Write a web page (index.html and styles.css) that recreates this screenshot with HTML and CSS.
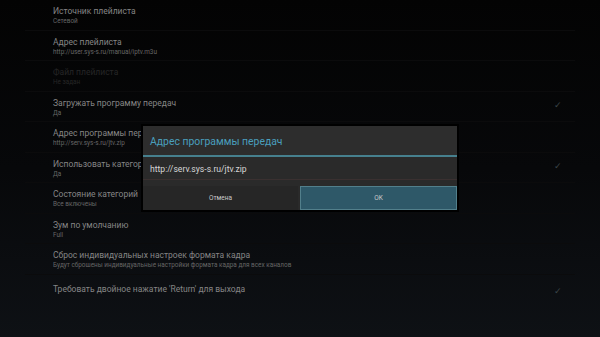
FILE: index.html
```html
<!DOCTYPE html>
<html lang="ru">
<head>
    <meta charset="UTF-8">
    <title>Настройки</title>
    <link rel="stylesheet" href="styles.css">
</head>
<body>

    <div class="screen">
        <!-- Settings list -->
        <div class="prefs">
            <div class="pref">
                <div class="pref-text">
                    <div class="pref-title">Источник плейлиста</div>
                    <div class="pref-sub">Сетевой</div>
                </div>
            </div>
            <div class="pref">
                <div class="pref-text">
                    <div class="pref-title">Адрес плейлиста</div>
                    <div class="pref-sub">http://user.sys-s.ru/manual/iptv.m3u</div>
                </div>
            </div>
            <div class="pref disabled">
                <div class="pref-text">
                    <div class="pref-title">Файл плейлиста</div>
                    <div class="pref-sub">Не задан</div>
                </div>
            </div>
            <div class="pref">
                <div class="pref-text">
                    <div class="pref-title">Загружать программу передач</div>
                    <div class="pref-sub">Да</div>
                </div>
                <span class="check">&#10003;</span>
            </div>
            <div class="pref">
                <div class="pref-text">
                    <div class="pref-title">Адрес программы передач</div>
                    <div class="pref-sub">http://serv.sys-s.ru/jtv.zip</div>
                </div>
            </div>
            <div class="pref">
                <div class="pref-text">
                    <div class="pref-title">Использовать категории</div>
                    <div class="pref-sub">Да</div>
                </div>
                <span class="check">&#10003;</span>
            </div>
            <div class="pref">
                <div class="pref-text">
                    <div class="pref-title">Состояние категорий</div>
                    <div class="pref-sub">Все включены</div>
                </div>
            </div>
            <div class="pref">
                <div class="pref-text">
                    <div class="pref-title">Зум по умолчанию</div>
                    <div class="pref-sub">Full</div>
                </div>
            </div>
            <div class="pref">
                <div class="pref-text">
                    <div class="pref-title">Сброс индивидуальных настроек формата кадра</div>
                    <div class="pref-sub">Будут сброшены индивидуальные настройки формата кадра для всех каналов</div>
                </div>
            </div>
            <div class="pref single">
                <div class="pref-text">
                    <div class="pref-title">Требовать двойное нажатие 'Return' для выхода</div>
                </div>
                <span class="check">&#10003;</span>
            </div>
        </div>

        <!-- Edit dialog -->
        <div class="dialog">
            <div class="dialog-title">Адрес программы передач</div>
            <div class="dialog-body">
                <div class="dialog-input">http://serv.sys-s.ru/jtv.zip</div>
            </div>
            <div class="dialog-buttons">
                <button class="btn-cancel">Отмена</button>
                <button class="btn-ok">OK</button>
            </div>
        </div>
    </div>

</body>
</html>
```

FILE: styles.css
```css
body {
    margin: 0;
    font-family: Roboto, "Noto Sans", sans-serif;
    background-color: #050505;
}

.screen {
    position: relative;
    width: 600px;
    height: 337px;
    overflow: hidden;
    background: linear-gradient(#030303 0%, #07080a 50%, #0e1115 100%);
}

.prefs {
    margin: 0 25px;
}

.pref {
    display: flex;
    justify-content: space-between;
    align-items: flex-start;
    padding: 5px 13px 3.5px 28px;
    border-bottom: 1px solid #0b0b0c;
}

.pref-title {
    font-size: 8.5px;
    line-height: 12px;
    color: #858585;
    white-space: nowrap;
}

.pref-sub {
    font-size: 6.4px;
    line-height: 9px;
    color: #666;
    white-space: nowrap;
}

.pref.disabled .pref-title,
.pref.disabled .pref-sub {
    color: #262626;
}

.pref.single {
    padding-top: 8px;
    border-bottom: none;
}

.check {
    font-size: 9px;
    line-height: 12px;
    color: #3c4749;
    margin-top: 2px;
}

.dialog {
    position: absolute;
    left: 143px;
    top: 126px;
    width: 314px;
    background-color: #2a2a2a;
    box-shadow: 0 0 0 2px #000;
}

.dialog-title {
    height: 29px;
    line-height: 31px;
    padding-left: 7px;
    font-size: 10.4px;
    color: #4a9fbd;
    background-color: #2d2d2d;
    border-bottom: 2px solid #46808e;
}

.dialog-body {
    padding: 1px 0 6px;
}

.dialog-input {
    height: 21px;
    line-height: 22px;
    padding-left: 7px;
    font-size: 8.6px;
    color: #d6d6d6;
    border-bottom: 1px solid #3a3030;
}

.dialog-buttons {
    display: flex;
    gap: 2px;
    height: 24px;
}

.dialog-buttons button {
    flex: 1;
    margin: 0;
    padding: 0;
    border: none;
    font-family: Roboto, sans-serif;
    font-size: 6.5px;
    color: #c8c8c8;
    cursor: pointer;
}

.btn-cancel {
    background-color: #262626;
}

.btn-ok {
    background-color: #2e5868;
    border: 1px solid #527f8b !important;
}
```
